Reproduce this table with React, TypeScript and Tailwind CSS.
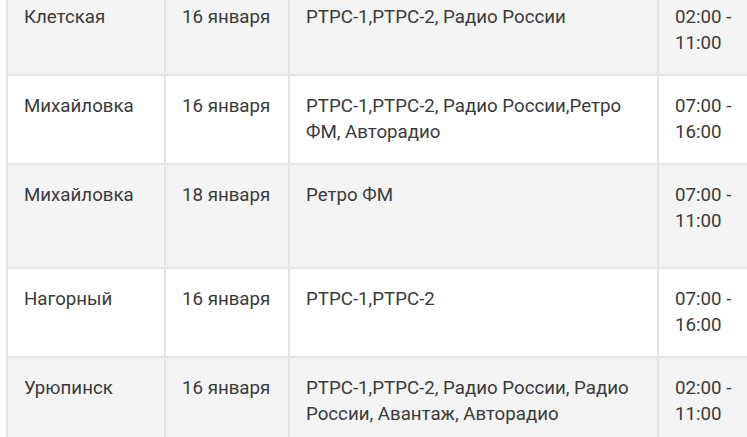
const rows = [
  { city: "Клетская", date: "16 января", channels: "РТРС-1,РТРС-2, Радио России", time: "02:00 - 11:00", tall: false },
  { city: "Михайловка", date: "16 января", channels: "РТРС-1,РТРС-2, Радио России,Ретро ФМ, Авторадио", time: "07:00 - 16:00", tall: false },
  { city: "Михайловка", date: "18 января", channels: "Ретро ФМ", time: "07:00 - 11:00", tall: true },
  { city: "Нагорный", date: "16 января", channels: "РТРС-1,РТРС-2", time: "07:00 - 16:00", tall: false },
  { city: "Урюпинск", date: "16 января", channels: "РТРС-1,РТРС-2, Радио России, Радио России, Авантаж, Авторадио", time: "02:00 - 11:00", tall: false },
];

export default function App() {
  return (
    <div className="h-[437px] w-[747px] overflow-hidden bg-white pl-[6px] font-['Roboto',sans-serif] text-[18.7px] leading-[26px] text-[#3a3a3a]">
      <div className="-mt-[13px] w-[800px] border-l-2 border-[#e4e4e4]">
        {rows.map((r, i) => (
          <div
            key={i}
            className={`grid grid-cols-[156px_124px_369px_151px] border-[#e4e4e4] ${i > 0 ? "border-t-2" : ""} ${i % 2 === 0 ? "bg-[#f4f4f4]" : "bg-white"} ${r.tall ? "h-[104px]" : ""}`}
          >
            <div className="pl-[16px] pr-2 pt-[17px] pb-[18px]">{r.city}</div>
            <div className="border-l-2 border-[#e4e4e4] pl-[16px] pt-[17px] pb-[18px]">{r.date}</div>
            <div className="border-l-2 border-[#e4e4e4] pl-[16px] pr-[14px] pt-[17px] pb-[18px]">{r.channels}</div>
            <div className="w-[90px] border-l-2 border-[#e4e4e4] pl-[16px] pt-[17px] pb-[18px]">{r.time}</div>
          </div>
        ))}
      </div>
    </div>
  );
}
